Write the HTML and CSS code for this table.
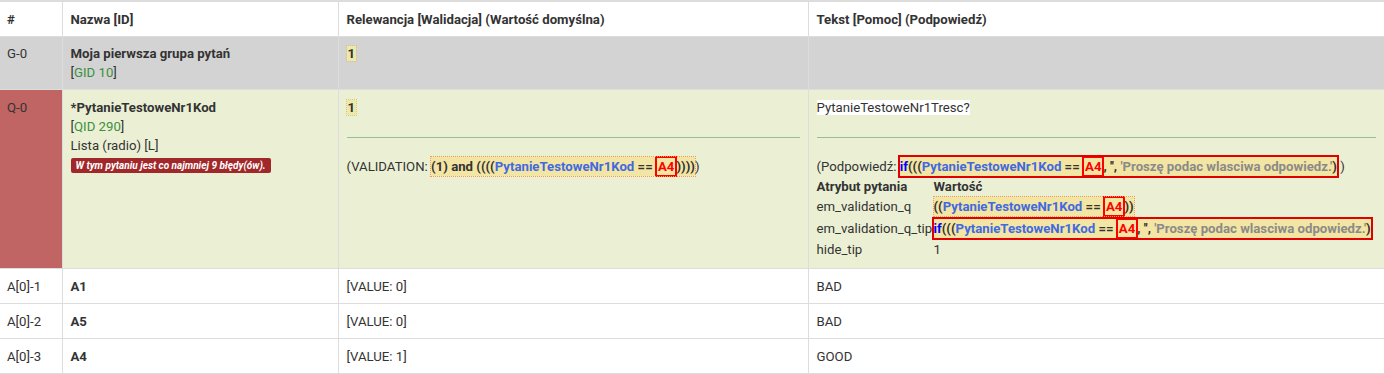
FILE: index.html
```html
<!DOCTYPE html>
<html lang="pl">
<head>
<meta charset="utf-8">
<link rel="stylesheet" href="styles.css">
</head>
<body>
<table class="logic">
  <colgroup>
    <col class="c1"><col class="c2"><col class="c3"><col class="c4">
  </colgroup>
  <thead>
    <tr class="head">
      <th>#</th>
      <th>Nazwa [ID]</th>
      <th>Relewancja [Walidacja] (Wartość domyślna)</th>
      <th>Tekst [Pomoc] (Podpowiedź)</th>
    </tr>
  </thead>
  <tbody>
    <tr class="group">
      <td>G-0</td>
      <td><b>Moja pierwsza grupa pytań</b><br>[<span class="gid">GID 10</span>]</td>
      <td><span class="rel">1</span></td>
      <td></td>
    </tr>
    <tr class="question">
      <td class="err">Q-0</td>
      <td>
        <b>*PytanieTestoweNr1Kod</b><br>
        [<span class="gid">QID 290</span>]<br>
        Lista (radio) [L]<br>
        <span class="badge">W tym pytaniu jest co najmniej 9 błędy(ów).</span>
      </td>
      <td>
        <span class="rel">1</span>
        <hr class="sep">
        <div class="valid">(VALIDATION: <span class="expr"><b>(1) and ((((<span class="var">PytanieTestoweNr1Kod</span> == <span class="bad">A4</span>))))</b></span>)</div>
      </td>
      <td>
        <span class="qtext">PytanieTestoweNr1Tresc?</span>
        <hr class="sep">
        <div class="tip">(Podpowiedź: <span class="errexpr"><b><span class="kw">if</span>(((<span class="var">PytanieTestoweNr1Kod</span> == <span class="bad">A4</span>, '', <span class="str">'Proszę podac wlasciwa odpowiedz.'</span>)</b></span> )</div>
        <table class="attrs">
          <tr><th>Atrybut pytania</th><th>Wartość</th></tr>
          <tr><td>em_validation_q</td><td><span class="expr"><b>((<span class="var">PytanieTestoweNr1Kod</span> == <span class="bad">A4</span>))</b></span></td></tr>
          <tr class="tiprow"><td>em_validation_q_tip</td><td><span class="errexpr"><b><span class="kw">if</span>(((<span class="var">PytanieTestoweNr1Kod</span> == <span class="bad">A4</span>, '', <span class="str">'Proszę podac wlasciwa odpowiedz.'</span>)</b></span></td></tr>
          <tr><td>hide_tip</td><td>1</td></tr>
        </table>
      </td>
    </tr>
    <tr class="answer">
      <td>A[0]-1</td><td><b>A1</b></td><td>[VALUE: 0]</td><td>BAD</td>
    </tr>
    <tr class="answer">
      <td>A[0]-2</td><td><b>A5</b></td><td>[VALUE: 0]</td><td>BAD</td>
    </tr>
    <tr class="answer">
      <td>A[0]-3</td><td><b>A4</b></td><td>[VALUE: 1]</td><td>GOOD</td>
    </tr>
  </tbody>
</table>
</body>
</html>
```

FILE: styles.css
```css
html, body {
  margin: 0;
  padding: 0;
  background: #fff;
}
body {
  font-family: Roboto, "Liberation Sans", sans-serif;
  font-size: 13.2px;
  color: #333;
  line-height: 19px;
}
.logic {
  width: 1384px;
  border-collapse: collapse;
  table-layout: fixed;
  border-top: 2px solid #ddd;
}
.c1 { width: 62px; }
.c2 { width: 276px; }
.c3 { width: 470px; }
.c4 { width: auto; }
.logic > thead > tr > th,
.logic > tbody > tr > td {
  border: 1px solid #ddd;
  border-top: 0;
  padding: 8px;
  vertical-align: top;
  text-align: left;
}
.logic > thead > tr > th:first-child,
.logic > tbody > tr > td:first-child {
  border-left: 0;
  padding-left: 7px;
}
.logic > thead > tr > th:last-child,
.logic > tbody > tr > td:last-child {
  border-right: 0;
}
.head > th {
  font-weight: bold;
  height: 19px;
  padding-top: 8px !important;
  padding-bottom: 7px !important;
  border-bottom: 1px solid #ddd !important;
  color: #333;
}
.group > td {
  background: #d3d3d3;
  height: 37px;
  padding-top: 7px !important;
  padding-bottom: 7px !important;
}
.gid { color: #3c8f3c; }
.rel {
  background: #eee8aa;
  outline: 1px dotted #d8c77a;
  font-weight: bold;
  padding: 0 1px;
}
.question > td {
  background: #ebf0d5;
  height: 162px;
}
.question > td.err {
  background: #c06464;
}
.badge {
  display: inline-block;
  margin-top: 3px;
  background: #a1282a;
  color: #fff;
  font-size: 10px;
  font-weight: bold;
  font-style: italic;
  line-height: 15px;
  padding: 0 5px;
  border-radius: 2px;
}
hr.sep {
  border: 0;
  border-top: 1px solid #97bf97;
  margin: 20px 0 19px;
  height: 0;
}
.expr {
  background: #f3e5a3;
  outline: 1px dotted #f29a4a;
  padding: 2px 0;
}
.var { color: #4169e1; }
.kw { color: #0000ff; }
.str { color: #8a8a8a; }
.bad {
  color: #ff0000;
  outline: 2px solid #ff0000;
  outline-offset: 0;
  padding: 1px 1px;
  margin: 0 1px;
}
.errexpr {
  background: #f3e5a3;
  outline: 2px solid #e00000;
  outline-offset: 0;
  padding: 2px 0;
}
.qtext { background: #fff; }
.attrs {
  border-collapse: collapse;
  margin-top: 1px;
}
.attrs th {
  text-align: left;
  font-weight: bold;
  padding: 0;
  line-height: 20px;
}
.attrs td {
  padding: 0;
  line-height: 20px;
}
.attrs td:first-child { width: 117px; }
.attrs .tiprow td { padding: 2px 0 1px; }
.answer > td {
  height: 19px;
  line-height: 19px;
  background: #fff;
  padding-bottom: 7px !important;
}
```
